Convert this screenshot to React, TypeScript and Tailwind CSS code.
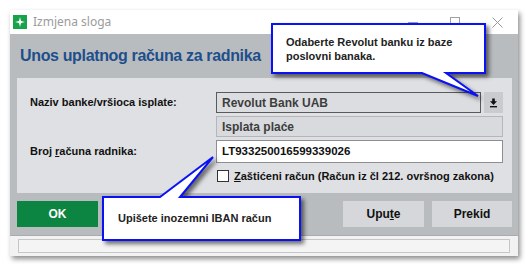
import React from 'react';

const sans = { fontFamily: '"Liberation Sans", Arial, sans-serif' };

function AppIcon() {
  return (
    <svg width="14" height="14" viewBox="0 0 14 14">
      <rect width="14" height="14" fill="#17a34a" />
      <path d="M7 2 L8 6 L12 7 L8 8 L7 12 L6 8 L2 7 L6 6 Z" fill="#ffffff" />
      <circle cx="7" cy="7" r="1.6" fill="#ffffff" />
    </svg>
  );
}

function Callouts() {
  return (
    <svg
      className="absolute left-0 top-0 pointer-events-none"
      width="530"
      height="269"
      style={{ filter: 'drop-shadow(3px 3px 2px rgba(0,0,0,0.55))' }}
    >
      <path
        d="M272 24 H485 V73 H446 L478 96 L422 73 H272 Z"
        fill="#ffffff"
        stroke="#0a12f5"
        strokeWidth="2"
      />
      <path
        d="M103 197 H160 L213 157 L180 197 H300 V240 H103 Z"
        fill="#ffffff"
        stroke="#0a12f5"
        strokeWidth="2"
      />
    </svg>
  );
}

export default function App() {
  return (
    <div className="relative w-[530px] h-[269px] bg-white overflow-hidden" style={sans}>
      <div className="absolute left-[10px] top-[10px] w-[508px] h-[246px] flex flex-col shadow-[2px_3px_5px_rgba(0,0,0,0.45)]">
        {/* title bar */}
        <div className="h-[24px] bg-white flex items-center pl-[3px]">
          <AppIcon />
          <span className="ml-[6px] text-[12px] text-[#9b9b9b]" style={{ fontFamily: '"Noto Sans", sans-serif' }}>
            Izmjena sloga
          </span>
          <div className="ml-auto flex items-center">
            <span className="w-[42px] flex justify-center">
              <span className="block w-[10px] h-px bg-[#a0a0a0]" />
            </span>
            <span className="w-[42px] flex justify-center">
              <span className="block w-[10px] h-[10px] border border-[#a0a0a0]" />
            </span>
            <span className="w-[42px] flex justify-center">
              <svg width="11" height="11" viewBox="0 0 11 11">
                <path d="M0.5 0.5 L10.5 10.5 M10.5 0.5 L0.5 10.5" stroke="#9a9a9a" strokeWidth="1" />
              </svg>
            </span>
          </div>
        </div>

        {/* body */}
        <div className="flex-1 flex flex-col bg-[#b9bcbf]">
          <div className="h-[44px] pl-[10px] pt-[12px] text-[16px] font-bold leading-[20px] tracking-[-0.35px] text-[#1d4f8c]">
            Unos uplatnog računa za radnika
          </div>

          <div className="ml-[7px] mr-[6px] h-[115px] bg-[#dfe0e3] flex pt-[14px] pl-[13px] pr-[9px] text-[11px] font-bold">
            <div className="w-[186px] flex flex-col text-[#111]">
              <div className="h-[21px] flex items-center">Naziv banke/vršioca isplate:</div>
              <div className="h-[24px]" />
              <div className="h-[23px] mt-[3px] flex items-center">
                Broj&nbsp;<span className="underline">r</span>ačuna radnika:
              </div>
            </div>
            <div className="flex-1 flex flex-col">
              <div className="flex h-[21px]">
                <div className="w-[265px] border border-[#5a5a5a] bg-[#dcdde0] flex items-center pl-[5px] text-[12px] text-[#3d3d3d]">
                  Revolut Bank UAB
                </div>
                <div className="ml-[3px] w-[19px] bg-[#c9cbce] flex items-center justify-center">
                  <svg width="9" height="10" viewBox="0 0 9 10">
                    <path d="M4.5 7 L1 3.2 H3.2 V0.5 H5.8 V3.2 H8 Z" fill="#111" />
                    <rect x="1" y="8" width="7" height="1.4" fill="#111" />
                  </svg>
                </div>
              </div>
              <div className="mt-[3px] h-[21px] border border-[#b4b6b9] bg-[#d8dadd] flex items-center pl-[5px] text-[12px] text-[#3d3d3d]">
                Isplata plaće
              </div>
              <div className="mt-[3px] h-[23px] border border-[#8c8e91] bg-white flex items-center pl-[5px] text-[11.5px] text-[#111]">
                LT933250016599339026
              </div>
              <div className="mt-[5px] flex items-center text-[#111]">
                <span className="w-[12px] h-[12px] border border-[#333] bg-white ml-[1px]" />
                <span className="ml-[5px] whitespace-nowrap">
                  <span className="underline">Z</span>aštićeni račun (Račun iz čl 212. ovršnog zakona)
                </span>
              </div>
            </div>
          </div>

          <div className="mt-[8px] ml-[7px] mr-[6px] h-[26px] flex text-[12px] font-bold">
            <div className="w-[81px] bg-[#0b8541] text-white flex items-center justify-center">OK</div>
            <div className="ml-auto w-[81px] bg-[#d5d7da] text-[#111] flex items-center justify-center">
              Upu<span className="underline">t</span>e
            </div>
            <div className="ml-[8px] w-[80px] bg-[#d5d7da] text-[#111] flex items-center justify-center">
              Prekid
            </div>
          </div>

          <div className="mt-[8px] flex-1 bg-[#f2f2f2] border-t border-[#a9abae] px-[8px] pt-[3px] pb-[3px]">
            <div className="h-full border border-[#c6c6c6] bg-[#f4f4f4]" />
          </div>
        </div>
      </div>

      <Callouts />
      <div className="absolute left-[286px] top-[35px] text-[11px] font-bold leading-[14px] text-[#222]">
        Odaberte Revolut banku iz baze
        <br />
        poslovni banaka.
      </div>
      <div className="absolute left-[118px] top-[211px] text-[11px] font-bold leading-[14px] text-[#222]">
        Upišete inozemni IBAN račun
      </div>
    </div>
  );
}
